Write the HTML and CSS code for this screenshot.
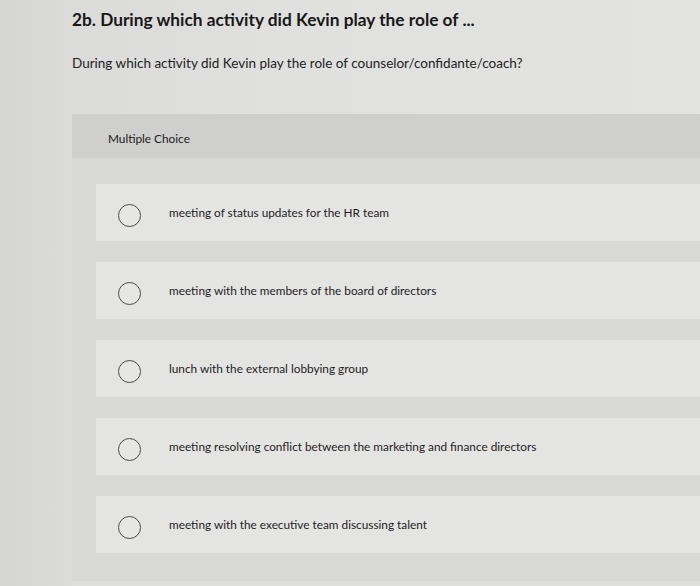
FILE: index.html
```html
<!DOCTYPE html>
<html>
<head>
<meta charset="utf-8">
<link rel="stylesheet" href="styles.css">
</head>
<body>
<div class="page">
  <h1 class="title">2b. During which activity did Kevin play the role of ...</h1>
  <p class="prompt">During which activity did Kevin play the role of counselor/confidante/coach?</p>
  <div class="panel">
    <div class="panel-head">Multiple Choice</div>
    <div class="panel-body">
      <div class="option"><span class="radio"></span><span class="label">meeting of status updates for the HR team</span></div>
      <div class="option"><span class="radio"></span><span class="label">meeting with the members of the board of directors</span></div>
      <div class="option"><span class="radio"></span><span class="label">lunch with the external lobbying group</span></div>
      <div class="option"><span class="radio"></span><span class="label">meeting resolving conflict between the marketing and finance directors</span></div>
      <div class="option"><span class="radio"></span><span class="label">meeting with the executive team discussing talent</span></div>
    </div>
  </div>
</div>
</body>
</html>
```

FILE: styles.css
```css
html, body {
  margin: 0;
  padding: 0;
}
body {
  width: 700px;
  height: 586px;
  overflow: hidden;
  background: linear-gradient(90deg, #d5d5d3 0%, #dbdbd9 10%, #e0e0de 40%, #e3e3e1 100%);
  font-family: "Liberation Sans", Arial, sans-serif;
  color: #222;
}
.page {
  display: flex;
  flex-direction: column;
  padding: 10px 0 0 72px;
}
.title {
  margin: 0;
  font-family: Lato, "Liberation Sans", sans-serif;
  font-weight: 700;
  font-size: 17.3px;
  line-height: 20px;
  color: #181818;
}
.prompt {
  margin: 24px 0 0 0;
  font-family: Lato, "Liberation Sans", sans-serif;
  font-size: 13.5px;
  line-height: 18px;
  color: #222;
}
.panel {
  margin-top: 42px;
  background: #d8d8d6;
  display: flex;
  flex-direction: column;
}
.panel-head {
  height: 44px;
  display: flex;
  align-items: center;
  padding-left: 36px;
  padding-top: 4px;
  box-sizing: border-box;
  background: #cfcfcd;
  font-family: Lato, "Liberation Sans", sans-serif;
  font-size: 11.8px;
  color: #222;
}
.panel-body {
  display: flex;
  flex-direction: column;
  gap: 21px;
  padding: 26px 0 28px 24px;
  border-bottom: 6px solid #dededc;
}
.option {
  height: 57px;
  display: flex;
  align-items: center;
  gap: 28px;
  padding-left: 22px;
  background: #e4e4e2;
}
.radio {
  width: 21px;
  height: 21px;
  border: 1.5px solid #4a4a4a;
  border-radius: 50%;
  flex: none;
  margin-top: 6px;
  background: #e6e6e4;
}
.label {
  font-family: Lato, "Liberation Sans", sans-serif;
  font-size: 11.8px;
  color: #1e1e1e;
}
```
